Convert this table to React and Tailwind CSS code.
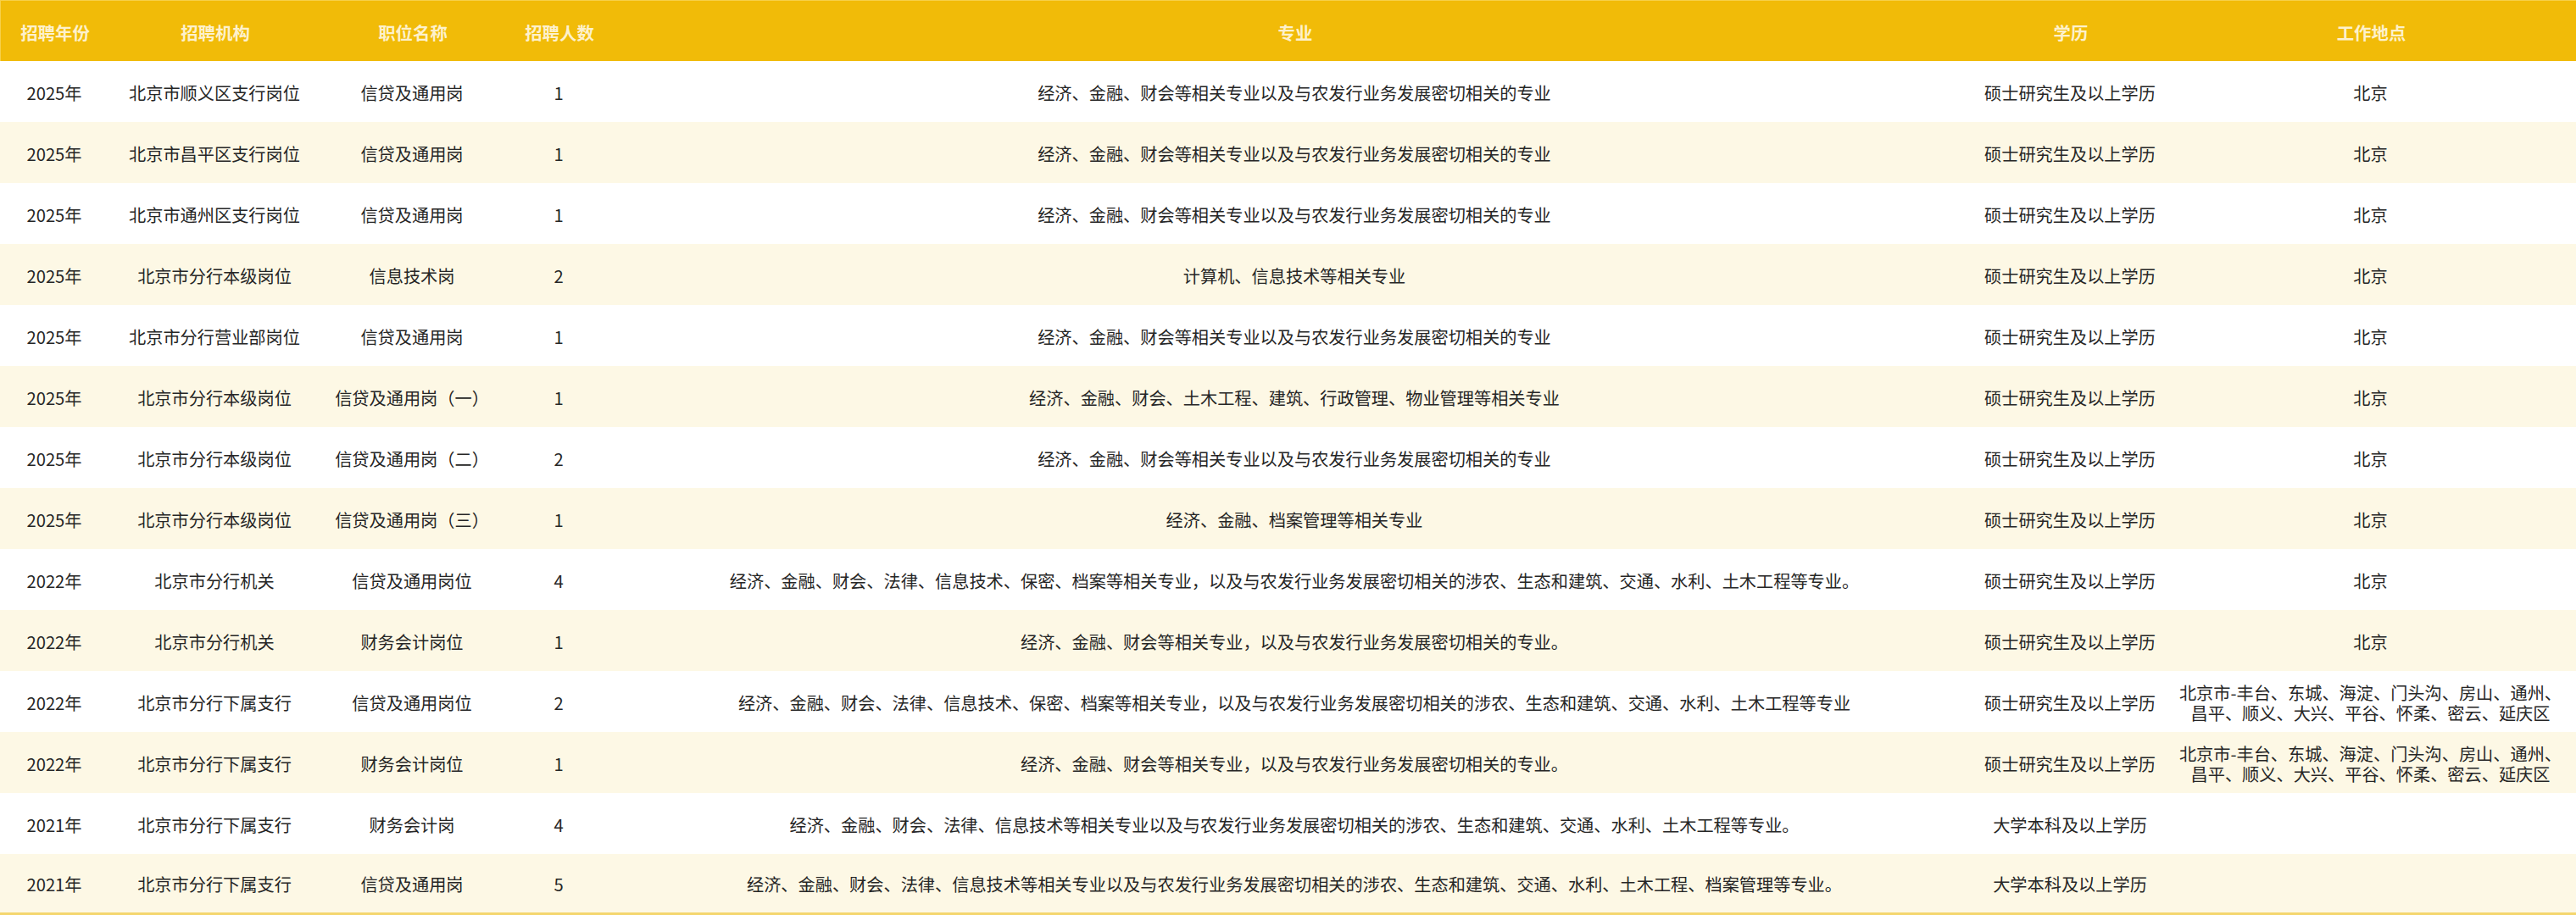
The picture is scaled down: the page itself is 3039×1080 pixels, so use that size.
import React from "react";

const headers = ["招聘年份", "招聘机构", "职位名称", "招聘人数", "专业", "学历", "工作地点"];

const M1 = "经济、金融、财会等相关专业以及与农发行业务发展密切相关的专业";
const SS = "硕士研究生及以上学历";
const BK = "大学本科及以上学历";
const AREA = "北京市-丰台、东城、海淀、门头沟、房山、通州、昌平、顺义、大兴、平谷、怀柔、密云、延庆区";

const rows = [
  ["2025年", "北京市顺义区支行岗位", "信贷及通用岗", "1", M1, SS, "北京"],
  ["2025年", "北京市昌平区支行岗位", "信贷及通用岗", "1", M1, SS, "北京"],
  ["2025年", "北京市通州区支行岗位", "信贷及通用岗", "1", M1, SS, "北京"],
  ["2025年", "北京市分行本级岗位", "信息技术岗", "2", "计算机、信息技术等相关专业", SS, "北京"],
  ["2025年", "北京市分行营业部岗位", "信贷及通用岗", "1", M1, SS, "北京"],
  ["2025年", "北京市分行本级岗位", "信贷及通用岗（一）", "1", "经济、金融、财会、土木工程、建筑、行政管理、物业管理等相关专业", SS, "北京"],
  ["2025年", "北京市分行本级岗位", "信贷及通用岗（二）", "2", M1, SS, "北京"],
  ["2025年", "北京市分行本级岗位", "信贷及通用岗（三）", "1", "经济、金融、档案管理等相关专业", SS, "北京"],
  ["2022年", "北京市分行机关", "信贷及通用岗位", "4", "经济、金融、财会、法律、信息技术、保密、档案等相关专业，以及与农发行业务发展密切相关的涉农、生态和建筑、交通、水利、土木工程等专业。", SS, "北京"],
  ["2022年", "北京市分行机关", "财务会计岗位", "1", "经济、金融、财会等相关专业，以及与农发行业务发展密切相关的专业。", SS, "北京"],
  ["2022年", "北京市分行下属支行", "信贷及通用岗位", "2", "经济、金融、财会、法律、信息技术、保密、档案等相关专业，以及与农发行业务发展密切相关的涉农、生态和建筑、交通、水利、土木工程等专业", SS, AREA],
  ["2022年", "北京市分行下属支行", "财务会计岗位", "1", "经济、金融、财会等相关专业，以及与农发行业务发展密切相关的专业。", SS, AREA],
  ["2021年", "北京市分行下属支行", "财务会计岗", "4", "经济、金融、财会、法律、信息技术等相关专业以及与农发行业务发展密切相关的涉农、生态和建筑、交通、水利、土木工程等专业。", BK, ""],
  ["2021年", "北京市分行下属支行", "信贷及通用岗", "5", "经济、金融、财会、法律、信息技术等相关专业以及与农发行业务发展密切相关的涉农、生态和建筑、交通、水利、土木工程、档案管理等专业。", BK, ""],
];

const gridCols = "grid grid-cols-[128px_250px_216px_130px_1606px_224px_485px]";

export default function App() {
  return (
    <div
      className="w-[3039px] h-[1080px] bg-white overflow-hidden"
      style={{ fontFamily: '"Noto Sans CJK SC", "Noto Sans", sans-serif' }}
    >
      <div className={`${gridCols} h-[72px] bg-[#f1bb08] border-t border-l border-[#f6d04a]`}>
        {headers.map((h, i) => (
          <div
            key={i}
            className="flex items-center justify-center text-[20.4px] font-bold text-[#fdf1cc] pt-[3px]"
          >
            {h}
          </div>
        ))}
      </div>
      {rows.map((r, ri) => (
        <div
          key={ri}
          className={`${gridCols} h-[72px] ${ri % 2 === 1 ? "bg-[#fdf8e5]" : "bg-white"} ${
            ri === rows.length - 1 ? "border-b-[3px] border-[#f4d66e]" : ""
          }`}
        >
          {r.map((c, ci) => (
            <div
              key={ci}
              className={`flex items-center justify-center text-center text-[20.2px] text-[#262626] pt-[3px] ${
                ci === 6 ? "px-[15px] leading-[24px]" : "leading-[28px]"
              }`}
            >
              {c}
            </div>
          ))}
        </div>
      ))}
    </div>
  );
}
